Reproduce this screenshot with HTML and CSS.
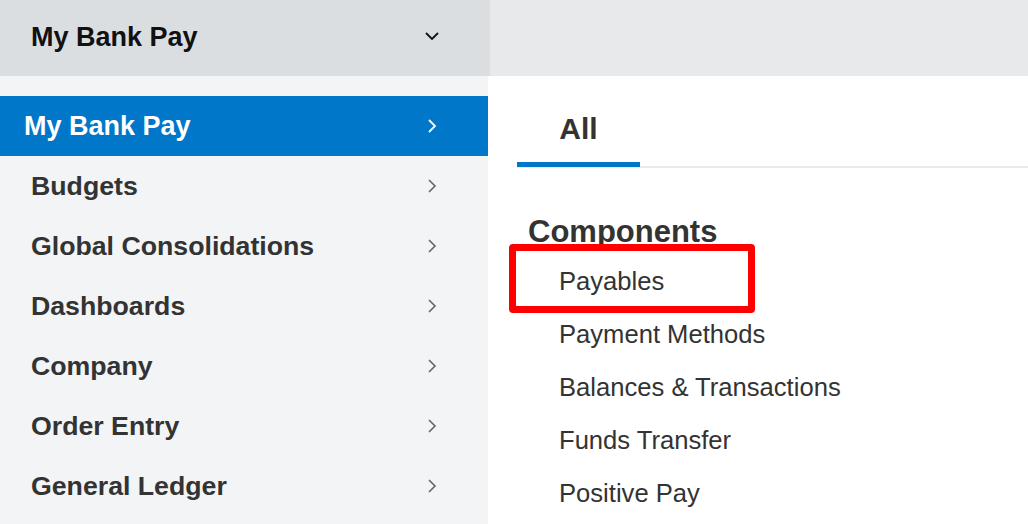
FILE: index.html
```html
<!DOCTYPE html>
<html lang="en">
<head>
<meta charset="utf-8">
<title>My Bank Pay</title>
<link rel="stylesheet" href="styles.css">
</head>
<body>
<div class="app">
  <header class="topbar">
    <div class="switcher">
      <span class="switcher-title">My Bank Pay</span>
      <svg class="chev-down" width="14" height="8" viewBox="0 0 14 8"><path d="M1 1 L7 7 L13 1" fill="none" stroke="#111" stroke-width="1.8"/></svg>
    </div>
    <div class="topbar-rest"></div>
  </header>
  <div class="body">
    <nav class="sidebar">
      <a class="nav-item active"><span>My Bank Pay</span><svg class="chev" width="10" height="14" viewBox="0 0 10 14"><path d="M2 1 L8 7 L2 13" fill="none" stroke="#fff" stroke-width="1.8"/></svg></a>
      <a class="nav-item"><span>Budgets</span><svg class="chev" width="10" height="14" viewBox="0 0 10 14"><path d="M2 1 L8 7 L2 13" fill="none" stroke="#666" stroke-width="1.6"/></svg></a>
      <a class="nav-item"><span>Global Consolidations</span><svg class="chev" width="10" height="14" viewBox="0 0 10 14"><path d="M2 1 L8 7 L2 13" fill="none" stroke="#666" stroke-width="1.6"/></svg></a>
      <a class="nav-item"><span>Dashboards</span><svg class="chev" width="10" height="14" viewBox="0 0 10 14"><path d="M2 1 L8 7 L2 13" fill="none" stroke="#666" stroke-width="1.6"/></svg></a>
      <a class="nav-item"><span>Company</span><svg class="chev" width="10" height="14" viewBox="0 0 10 14"><path d="M2 1 L8 7 L2 13" fill="none" stroke="#666" stroke-width="1.6"/></svg></a>
      <a class="nav-item"><span>Order Entry</span><svg class="chev" width="10" height="14" viewBox="0 0 10 14"><path d="M2 1 L8 7 L2 13" fill="none" stroke="#666" stroke-width="1.6"/></svg></a>
      <a class="nav-item"><span>General Ledger</span><svg class="chev" width="10" height="14" viewBox="0 0 10 14"><path d="M2 1 L8 7 L2 13" fill="none" stroke="#666" stroke-width="1.6"/></svg></a>
    </nav>
    <main class="content">
      <div class="tabbar">
        <div class="tab active">All</div>
      </div>
      <h2 class="section-title">Components</h2>
      <ul class="links">
        <li class="link highlighted">Payables</li>
        <li class="link">Payment Methods</li>
        <li class="link">Balances &amp; Transactions</li>
        <li class="link">Funds Transfer</li>
        <li class="link">Positive Pay</li>
      </ul>
    </main>
  </div>
</div>
</body>
</html>
```
FILE: styles.css
```css
*, *::before, *::after { box-sizing: border-box; }
html, body {
  margin: 0;
  padding: 0;
  height: 100%;
  overflow: hidden;
  font-family: "Liberation Sans", Arial, sans-serif;
  background: #fff;
}
.app {
  display: flex;
  flex-direction: column;
  height: 100vh;
}
.topbar {
  display: flex;
  height: 76px;
  flex: none;
}
.switcher {
  width: 490px;
  flex: none;
  background: #dbdee1;
  display: flex;
  align-items: center;
  justify-content: space-between;
  padding: 0 51px 0 31px;
}
.switcher-title {
  font-size: 27px;
  font-weight: bold;
  color: #111;
  line-height: 30px;
  margin-top: -3px;
}
.chev-down { display: block; margin-top: -4px; }
.topbar-rest {
  flex: 1;
  background: #e7e9eb;
}
.body {
  display: flex;
  flex: 1;
  min-height: 0;
}
.sidebar {
  width: 488px;
  flex: none;
  background: #f2f4f6;
  padding-top: 20px;
  display: flex;
  flex-direction: column;
}
.nav-item {
  height: 60px;
  display: flex;
  align-items: center;
  justify-content: space-between;
  padding: 0 51px 0 31px;
  font-size: 26.7px;
  font-weight: bold;
  color: #333;
  line-height: 30px;
}
.nav-item span { margin-top: -1px; }
.nav-item .chev { display: block; }
.nav-item.active {
  background: #0077c8;
  color: #fff;
  padding-left: 24px;
  font-size: 27px;
}
.content {
  flex: 1;
  background: #fff;
}
.tabbar {
  margin-left: 29px;
  border-bottom: 2px solid #e8eaec;
  display: flex;
}
.tab {
  width: 123px;
  padding: 38px 0 18px;
  line-height: 30px;
  text-align: center;
  font-size: 30px;
  font-weight: bold;
  color: #333;
  border-bottom: 5px solid #0077c8;
  margin-bottom: -1px;
}
.section-title {
  margin: 46px 0 5px 40px;
  font-size: 31px;
  line-height: 36px;
  font-weight: bold;
  color: #333;
}
.links {
  list-style: none;
  margin: 0 0 0 71px;
  padding: 0;
}
.link {
  height: 53px;
  line-height: 53px;
  font-size: 25.6px;
  color: #333;
  position: relative;
}
.link.highlighted::after {
  content: "";
  position: absolute;
  left: -50px;
  top: -11px;
  width: 246px;
  height: 69px;
  border: 7px solid #f00;
  border-radius: 4px;
}
```
